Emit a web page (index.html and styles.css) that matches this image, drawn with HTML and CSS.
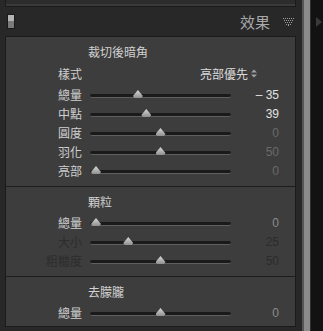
FILE: index.html
```html
<!DOCTYPE html>
<html lang="zh-Hant">
<head>
    <meta charset="UTF-8">
    <meta name="viewport" content="width=device-width, initial-scale=1.0">
    <title>效果</title>
    <link rel="stylesheet" href="styles.css">
</head>
<body>
    <div class="app">
        <div class="column">
            <div class="prev-panel"></div>

            <div class="panel-header">
                <span class="switch"></span>
                <h2 class="panel-title">效果</h2>
                <svg class="collapse" width="11" height="8" viewBox="0 0 11 8">
                    <g fill="#9a9a9a">
                        <rect x="0" y="0" width="1" height="1"/><rect x="2" y="0" width="1" height="1"/>
                        <rect x="4" y="0" width="1" height="1"/><rect x="6" y="0" width="1" height="1"/>
                        <rect x="8" y="0" width="1" height="1"/><rect x="10" y="0" width="1" height="1"/>
                        <rect x="1" y="2" width="1" height="1"/><rect x="3" y="2" width="1" height="1"/>
                        <rect x="5" y="2" width="1" height="1"/><rect x="7" y="2" width="1" height="1"/>
                        <rect x="9" y="2" width="1" height="1"/>
                        <rect x="2" y="4" width="1" height="1"/><rect x="4" y="4" width="1" height="1"/>
                        <rect x="6" y="4" width="1" height="1"/><rect x="8" y="4" width="1" height="1"/>
                        <rect x="3" y="6" width="1" height="1"/><rect x="5" y="6" width="1" height="1"/>
                        <rect x="7" y="6" width="1" height="1"/>
                        <rect x="5" y="7" width="1" height="1"/>
                    </g>
                </svg>
            </div>

            <div class="panel-body">
                <section class="group">
                    <h3 class="group-title">裁切後暗角</h3>
                    <div class="row style-row">
                        <span class="label">樣式</span>
                        <span class="dropdown">亮部優先
                            <svg class="updown" width="6" height="9" viewBox="0 0 6 9">
                                <path d="M0 3.5 L3 0.5 L6 3.5 Z M0 5.5 L3 8.5 L6 5.5 Z" fill="#a0a0a0"/>
                            </svg>
                        </span>
                    </div>
                    <div class="row">
                        <span class="label">總量</span>
                        <div class="slider"><div class="range"><span class="thumb" style="left: 32.5%"></span></div></div>
                        <span class="value active">– 35</span>
                    </div>
                    <div class="row">
                        <span class="label">中點</span>
                        <div class="slider"><div class="range"><span class="thumb" style="left: 39%"></span></div></div>
                        <span class="value active">39</span>
                    </div>
                    <div class="row">
                        <span class="label">圓度</span>
                        <div class="slider"><div class="range"><span class="thumb" style="left: 50%"></span></div></div>
                        <span class="value">0</span>
                    </div>
                    <div class="row">
                        <span class="label">羽化</span>
                        <div class="slider"><div class="range"><span class="thumb" style="left: 50%"></span></div></div>
                        <span class="value">50</span>
                    </div>
                    <div class="row">
                        <span class="label">亮部</span>
                        <div class="slider"><div class="range"><span class="thumb" style="left: 0%"></span></div></div>
                        <span class="value">0</span>
                    </div>
                </section>

                <section class="group">
                    <h3 class="group-title">顆粒</h3>
                    <div class="row">
                        <span class="label">總量</span>
                        <div class="slider"><div class="range"><span class="thumb" style="left: 0%"></span></div></div>
                        <span class="value light">0</span>
                    </div>
                    <div class="row disabled">
                        <span class="label">大小</span>
                        <div class="slider"><div class="range"><span class="thumb" style="left: 25%"></span></div></div>
                        <span class="value">25</span>
                    </div>
                    <div class="row disabled">
                        <span class="label">粗糙度</span>
                        <div class="slider"><div class="range"><span class="thumb" style="left: 50%"></span></div></div>
                        <span class="value">50</span>
                    </div>
                </section>

                <section class="group">
                    <h3 class="group-title">去朦朧</h3>
                    <div class="row">
                        <span class="label">總量</span>
                        <div class="slider"><div class="range"><span class="thumb" style="left: 50%"></span></div></div>
                        <span class="value light">0</span>
                    </div>
                </section>
            </div>
        </div>

        <div class="scrollbar">
            <span class="track"></span>
            <span class="edge"></span>
            <span class="arrow"></span>
        </div>
    </div>
</body>
</html>
```

FILE: styles.css
```css
* {
    box-sizing: border-box;
    margin: 0;
    padding: 0;
}

body {
    background-color: #151515;
    font-family: "Noto Sans CJK TC", "Noto Sans", sans-serif;
    font-size: 12px;
    color: #cfcfcf;
}

.app {
    display: flex;
    width: 323px;
    height: 331px;
}

.column {
    width: 302px;
    background-color: #282828;
    padding: 0 6px 0 5px;
}

.prev-panel {
    height: 7px;
    border: 1px solid #1b1b1b;
    border-top: none;
    background-color: #2c2c2c;
    box-shadow: inset 0 -2px 0 #3a3a3a;
}

.panel-header {
    display: flex;
    align-items: center;
    height: 29px;
    margin-left: -5px;
    padding-left: 7px;
}

.switch {
    width: 8px;
    height: 15px;
    border: 1px solid #1a1a1a;
    background: linear-gradient(#b4b4b4 0 50%, #7a7a7a 50% 100%);
}

.panel-title {
    flex: 1;
    text-align: right;
    font-size: 15px;
    font-weight: normal;
    color: #a8a8a8;
    padding-right: 13px;
}

.collapse {
    margin-right: 2px;
    margin-top: 1px;
}

.panel-body {
    background-color: #3d3d3d;
    border: 1px solid #1b1b1b;
    height: 291px;
}

.group {
    padding: 7px 0 6px;
    border-bottom: 1px solid #1d1d1d;
}

.group:last-child {
    border-bottom: none;
}

.group-title {
    font-size: 12px;
    font-weight: normal;
    line-height: 16px;
    color: #d2d2d2;
    padding-left: 82px;
    margin-bottom: 3px;
}

.row {
    display: grid;
    grid-template-columns: 77px 148px 1fr;
    align-items: center;
    height: 19px;
}

.style-row {
    height: 21px;
    margin-bottom: 1px;
}

.label {
    text-align: right;
    padding-right: 1px;
    line-height: 19px;
}

.dropdown {
    grid-column: 2 / 4;
    justify-self: end;
    display: flex;
    align-items: center;
    gap: 3px;
    margin-right: 38px;
    color: #dcdcdc;
}

.slider {
    margin-left: 7px;
    height: 19px;
    position: relative;
}

.slider::before {
    content: "";
    position: absolute;
    left: 0;
    right: 0;
    top: 9px;
    height: 3px;
    background-color: #1a1a1a;
    border-bottom: 1px solid #5f5f5f;
    border-radius: 2px;
}

.range {
    position: absolute;
    left: 6px;
    right: 6px;
    top: 0;
    bottom: 0;
}

.thumb {
    position: absolute;
    top: 5px;
    width: 10px;
    height: 8px;
    margin-left: -5px;
    background: linear-gradient(#dadada, #8e8e8e);
    clip-path: polygon(50% 0, 100% 75%, 85% 100%, 15% 100%, 0 75%);
}

.value {
    text-align: right;
    padding-right: 16px;
    font-family: "Liberation Sans", "Noto Sans", sans-serif;
    font-size: 12px;
    color: #6a6a6a;
}

.value.active {
    color: #e2e2e2;
}

.value.light {
    color: #8c8c8c;
}

.disabled .label,
.disabled .value {
    color: #2c2c2c;
}

.scrollbar {
    flex: 1;
    display: flex;
    align-items: flex-start;
    background-color: #121212;
}

.track {
    width: 8px;
    height: 100%;
    background-color: #8a8a8a;
    border-left: 2px solid #555;
}

.edge {
    width: 1px;
    height: 100%;
    background-color: #2e2e2e;
}

.arrow {
    margin: 17px 0 0 5px;
    border-left: 6px solid #3a3a3a;
    border-top: 5px solid transparent;
    border-bottom: 5px solid transparent;
}
```
